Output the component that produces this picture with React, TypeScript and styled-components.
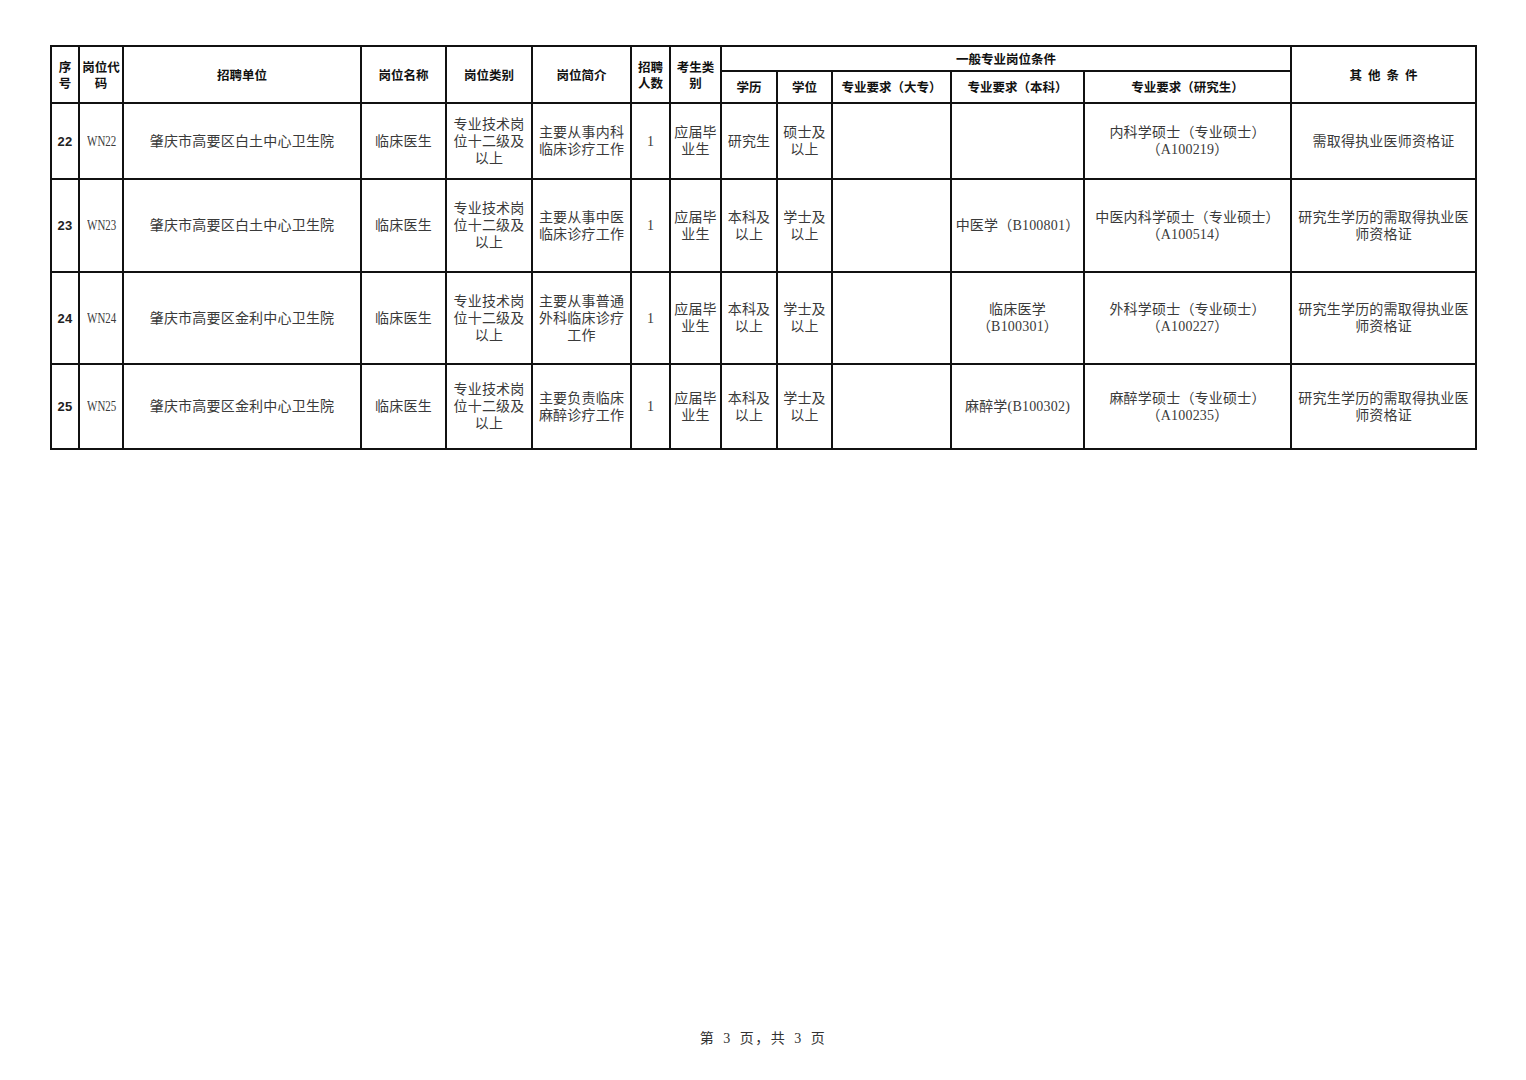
import React from 'react';
import styled, { createGlobalStyle } from 'styled-components';

const GlobalStyle = createGlobalStyle`
  html, body {
    margin: 0;
    padding: 0;
    background: #fff;
  }
`;

const Page = styled.div`
  width: 1526px;
  height: 1080px;
  box-sizing: border-box;
  padding: 45px 0 0 50px;
  display: flex;
  flex-direction: column;
  font-family: 'Liberation Serif', 'Noto Sans CJK SC', serif;
`;

const Table = styled.table`
  width: 1425px;
  table-layout: fixed;
  border-collapse: collapse;
  border: 2px solid #111;
`;

const HeadCell = styled.th<{ $h?: number }>`
  border: 2px solid #111;
  padding: 0 1px;
  height: ${p => (p.$h ? `${p.$h}px` : 'auto')};
  font-family: 'Noto Sans CJK SC', sans-serif;
  font-weight: 700;
  font-size: 12.5px;
  line-height: 16px;
  color: #111;
  text-align: center;
  vertical-align: middle;
`;

const Spaced = styled.span`
  letter-spacing: 6px;
  margin-right: -6px;
`;

const Condensed = styled.span`
  display: inline-block;
  font-size: 14px;
  letter-spacing: 0;
  transform: scaleX(0.78);
`;

const Cell = styled.td<{ $bold?: boolean }>`
  border: 2px solid #111;
  padding: 0 3px;
  font-size: 14px;
  line-height: 17px;
  letter-spacing: 0.2px;
  color: #3a3a3a;
  text-align: center;
  vertical-align: middle;
  white-space: nowrap;
  font-family: ${p =>
    p.$bold ? "'Liberation Sans', 'Noto Sans CJK SC', sans-serif" : "'Liberation Serif', 'Noto Sans CJK SC', serif"};
  font-weight: ${p => (p.$bold ? 700 : 400)};
  ${p => (p.$bold ? 'font-size: 13px; color: #222;' : '')}
`;

const Row = styled.tr<{ $h: number }>`
  height: ${p => p.$h}px;
`;

const Footer = styled.div`
  margin-top: auto;
  margin-left: -50px;
  padding-bottom: 33px;
  text-align: center;
  font-family: 'Liberation Serif', 'Noto Sans CJK SC', serif;
  font-size: 14px;
  color: #333;
  letter-spacing: 1.5px;
  word-spacing: 3px;
`;

const widths = [28, 44, 238, 85, 86, 99, 39, 51, 56, 55, 119, 133, 207, 185];

type Job = {
  no: string;
  code: string;
  unit: string;
  name: string;
  kind: string[];
  intro: string[];
  count: string;
  who: string[];
  edu: string[];
  degree: string[];
  zk: string[];
  bk: string[];
  yjs: string[];
  other: string[];
  h: number;
};

const jobs: Job[] = [
  {
    no: '22',
    code: 'WN22',
    unit: '肇庆市高要区白土中心卫生院',
    name: '临床医生',
    kind: ['专业技术岗', '位十二级及', '以上'],
    intro: ['主要从事内科', '临床诊疗工作'],
    count: '1',
    who: ['应届毕', '业生'],
    edu: ['研究生'],
    degree: ['硕士及', '以上'],
    zk: [],
    bk: [],
    yjs: ['内科学硕士（专业硕士）', '（A100219）'],
    other: ['需取得执业医师资格证'],
    h: 76,
  },
  {
    no: '23',
    code: 'WN23',
    unit: '肇庆市高要区白土中心卫生院',
    name: '临床医生',
    kind: ['专业技术岗', '位十二级及', '以上'],
    intro: ['主要从事中医', '临床诊疗工作'],
    count: '1',
    who: ['应届毕', '业生'],
    edu: ['本科及', '以上'],
    degree: ['学士及', '以上'],
    zk: [],
    bk: ['中医学（B100801）'],
    yjs: ['中医内科学硕士（专业硕士）', '（A100514）'],
    other: ['研究生学历的需取得执业医', '师资格证'],
    h: 93,
  },
  {
    no: '24',
    code: 'WN24',
    unit: '肇庆市高要区金利中心卫生院',
    name: '临床医生',
    kind: ['专业技术岗', '位十二级及', '以上'],
    intro: ['主要从事普通', '外科临床诊疗', '工作'],
    count: '1',
    who: ['应届毕', '业生'],
    edu: ['本科及', '以上'],
    degree: ['学士及', '以上'],
    zk: [],
    bk: ['临床医学', '（B100301）'],
    yjs: ['外科学硕士（专业硕士）', '（A100227）'],
    other: ['研究生学历的需取得执业医', '师资格证'],
    h: 92,
  },
  {
    no: '25',
    code: 'WN25',
    unit: '肇庆市高要区金利中心卫生院',
    name: '临床医生',
    kind: ['专业技术岗', '位十二级及', '以上'],
    intro: ['主要负责临床', '麻醉诊疗工作'],
    count: '1',
    who: ['应届毕', '业生'],
    edu: ['本科及', '以上'],
    degree: ['学士及', '以上'],
    zk: [],
    bk: ['麻醉学(B100302)'],
    yjs: ['麻醉学硕士（专业硕士）', '（A100235）'],
    other: ['研究生学历的需取得执业医', '师资格证'],
    h: 85,
  },
];

const Lines = ({ lines }: { lines: string[] }) => (
  <>
    {lines.map((l, i) => (
      <React.Fragment key={i}>
        {i > 0 && <br />}
        {l}
      </React.Fragment>
    ))}
  </>
);

export default function App() {
  return (
    <Page>
      <GlobalStyle />
      <Table>
        <colgroup>
          {widths.map((w, i) => (
            <col key={i} style={{ width: w }} />
          ))}
        </colgroup>
        <thead>
          <tr>
            <HeadCell rowSpan={2}>
              序<br />号
            </HeadCell>
            <HeadCell rowSpan={2}>
              岗位代<br />码
            </HeadCell>
            <HeadCell rowSpan={2}>招聘单位</HeadCell>
            <HeadCell rowSpan={2}>岗位名称</HeadCell>
            <HeadCell rowSpan={2}>岗位类别</HeadCell>
            <HeadCell rowSpan={2}>岗位简介</HeadCell>
            <HeadCell rowSpan={2}>
              招聘<br />人数
            </HeadCell>
            <HeadCell rowSpan={2}>
              考生类<br />别
            </HeadCell>
            <HeadCell colSpan={5} $h={23}>
              一般专业岗位条件
            </HeadCell>
            <HeadCell rowSpan={2}>
              <Spaced>其他条件</Spaced>
            </HeadCell>
          </tr>
          <tr>
            <HeadCell $h={30}>学历</HeadCell>
            <HeadCell>学位</HeadCell>
            <HeadCell>专业要求（大专）</HeadCell>
            <HeadCell>专业要求（本科）</HeadCell>
            <HeadCell>专业要求（研究生）</HeadCell>
          </tr>
        </thead>
        <tbody>
          {jobs.map(j => (
            <Row key={j.no} $h={j.h}>
              <Cell $bold>{j.no}</Cell>
              <Cell>
                <Condensed>{j.code}</Condensed>
              </Cell>
              <Cell>{j.unit}</Cell>
              <Cell>{j.name}</Cell>
              <Cell>
                <Lines lines={j.kind} />
              </Cell>
              <Cell>
                <Lines lines={j.intro} />
              </Cell>
              <Cell>{j.count}</Cell>
              <Cell>
                <Lines lines={j.who} />
              </Cell>
              <Cell>
                <Lines lines={j.edu} />
              </Cell>
              <Cell>
                <Lines lines={j.degree} />
              </Cell>
              <Cell>
                <Lines lines={j.zk} />
              </Cell>
              <Cell>
                <Lines lines={j.bk} />
              </Cell>
              <Cell>
                <Lines lines={j.yjs} />
              </Cell>
              <Cell>
                <Lines lines={j.other} />
              </Cell>
            </Row>
          ))}
        </tbody>
      </Table>
      <Footer>第 3 页，共 3 页</Footer>
    </Page>
  );
}
